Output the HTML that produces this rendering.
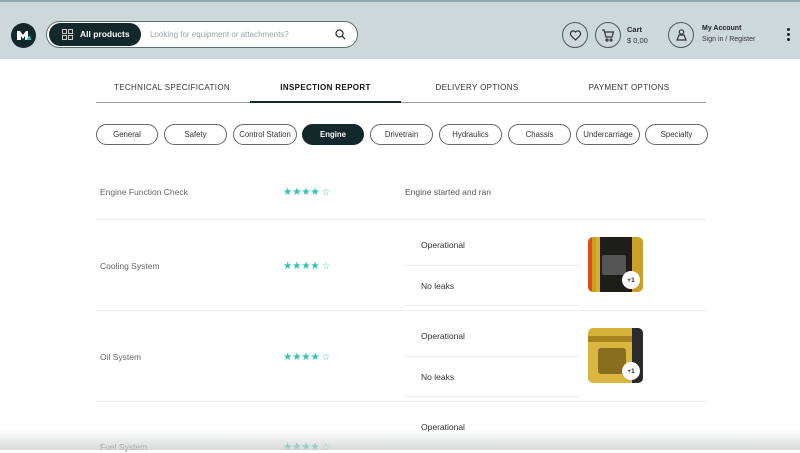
<!DOCTYPE html>
<html><head><meta charset="utf-8"><style>
*{box-sizing:border-box;margin:0;padding:0}
body{width:800px;height:450px;overflow:hidden;background:#fff;font-family:"Liberation Sans",sans-serif;position:relative}
.hdr{position:absolute;left:0;top:0;width:800px;height:59px;background:#cdd8da;border-top:2px solid #8fa8aa}
.abs{position:absolute}
.logo{left:11px;top:23px;width:25px;height:25px;border-radius:50%;background:#13282b}
.search{left:46px;top:21px;width:312px;height:27px;border-radius:14px;border:1px solid #5a6b6d;background:#fff}
.allp{left:49px;top:23px;width:92px;height:23px;border-radius:12px;background:#13282b;color:#fff;font-size:8.5px;font-weight:bold}
.ph{left:150px;top:30px;font-size:8px;color:#9aa4a8}
.circ{width:26px;height:26px;border-radius:50%;border:1px solid #4b5a5c}
.tab{top:83px;font-size:8px;letter-spacing:.35px;color:#333;text-align:center}
.pill{top:124px;height:21px;border-radius:11px;border:1px solid #666;font-size:7.8px;color:#333;display:flex;align-items:center;justify-content:center;background:#fff}
.lab{font-size:8.5px;color:#666}
.val{font-size:8.5px;color:#333}
.stars{font-size:10.5px;color:#2ec4b6;letter-spacing:-.3px}
.hl{height:1px;background:#eceeee}
.img{width:55px;height:55px;border-radius:5px;overflow:hidden}
.badge{right:3px;bottom:3px;width:18px;height:18px;border-radius:50%;background:#fff;font-size:6.5px;font-weight:bold;display:flex;align-items:center;justify-content:center;color:#222}
</style></head><body>
<div class="hdr"></div>
<div class="abs logo"><svg width="25" height="25" viewBox="0 0 25 25"><path d="M6 17V8h3l3 4 3-4h2v9h-3v-4l-2 3-2-3v4z" fill="#fff"/><path d="M15 17l4-5 1 5z" fill="#2ec4b6"/></svg></div>
<div class="abs search"></div>
<div class="abs allp"><svg class="abs" style="left:13px;top:6px" width="11" height="11" viewBox="0 0 11 11" fill="none" stroke="#ccc" stroke-width="1"><rect x=".5" y=".5" width="4" height="4"/><rect x="6.5" y=".5" width="4" height="4"/><rect x=".5" y="6.5" width="4" height="4"/><rect x="6.5" y="6.5" width="4" height="4"/></svg><span class="abs" style="left:31px;top:6px">All products</span></div>
<div class="abs ph">Looking for equipment or attachments?</div>
<svg class="abs" style="left:335px;top:29px" width="11" height="11" viewBox="0 0 11 11" fill="none" stroke="#333" stroke-width="1.3"><circle cx="4.5" cy="4.5" r="3.5"/><path d="M7 7l3 3"/></svg>
<div class="abs circ" style="left:562px;top:22px"><svg class="abs" style="left:6px;top:6px" width="13" height="13" viewBox="0 0 13 13" fill="none" stroke="#333" stroke-width="1.2"><path d="M6.5 11L2 6.5A2.5 2.5 0 016.5 3 2.5 2.5 0 0111 6.5z"/></svg></div>
<div class="abs circ" style="left:595px;top:22px"><svg class="abs" style="left:5px;top:6px" width="14" height="13" viewBox="0 0 14 13" fill="none" stroke="#333" stroke-width="1.2"><path d="M1 1h2l2 7h6l1.5-5H4"/><circle cx="6" cy="11" r="1"/><circle cx="10" cy="11" r="1"/></svg></div>
<div class="abs" style="left:627px;top:25px;font-size:7.5px;font-weight:bold;color:#222">Cart</div>
<div class="abs" style="left:627px;top:36px;font-size:7.5px;color:#333">$ 0,00</div>
<div class="abs circ" style="left:668px;top:22px"><svg class="abs" style="left:6px;top:5px" width="13" height="14" viewBox="0 0 13 14" fill="none" stroke="#333" stroke-width="1.2"><circle cx="6.5" cy="4" r="2.2"/><path d="M2 12l2-5h5l2 5z"/></svg></div>
<div class="abs" style="left:702px;top:25px;font-size:7px;font-weight:bold;color:#222">My Account</div>
<div class="abs" style="left:702px;top:36px;font-size:7px;color:#333">Sign in / Register</div>
<div class="abs" style="left:787px;top:28px;width:3px;height:3px;border-radius:50%;background:#222;box-shadow:0 5px 0 #222,0 10px 0 #222"></div>

<div class="abs tab" style="left:96px;width:152px">TECHNICAL SPECIFICATION</div>
<div class="abs tab" style="left:250px;width:151px;font-weight:bold;color:#111">INSPECTION REPORT</div>
<div class="abs tab" style="left:401px;width:152px">DELIVERY OPTIONS</div>
<div class="abs tab" style="left:553px;width:152px">PAYMENT OPTIONS</div>
<div class="abs" style="left:96px;top:102px;width:610px;height:1px;background:#999"></div>
<div class="abs" style="left:250px;top:101px;width:151px;height:2px;background:#13282b"></div>

<div class="abs pill" style="left:96px;width:62px">General</div>
<div class="abs pill" style="left:164px;width:63px">Safety</div>
<div class="abs pill" style="left:233px;width:64px">Control Station</div>
<div class="abs pill" style="left:302px;width:62px;background:#13282b;color:#fff;font-weight:bold;border-color:#13282b">Engine</div>
<div class="abs pill" style="left:370px;width:63px">Drivetrain</div>
<div class="abs pill" style="left:439px;width:63px">Hydraulics</div>
<div class="abs pill" style="left:508px;width:63px">Chassis</div>
<div class="abs pill" style="left:576px;width:64px">Undercarriage</div>
<div class="abs pill" style="left:645px;width:63px">Specialty</div>

<div class="abs lab" style="left:100px;top:187px">Engine Function Check</div>
<div class="abs stars" style="left:283px;top:186px">★★★★<span style="font-size:9.5px"> ☆</span></div>
<div class="abs val" style="left:405px;top:187px;color:#555">Engine started and ran</div>
<div class="abs hl" style="left:96px;top:219px;width:610px"></div>

<div class="abs lab" style="left:100px;top:261px">Cooling System</div>
<div class="abs stars" style="left:283px;top:260px">★★★★<span style="font-size:9.5px"> ☆</span></div>
<div class="abs val" style="left:421px;top:240px">Operational</div>
<div class="abs hl" style="left:405px;top:265px;width:175px"></div>
<div class="abs val" style="left:421px;top:281px">No leaks</div>
<div class="abs hl" style="left:405px;top:305px;width:175px"></div>
<div class="abs img" style="left:588px;top:237px;background:linear-gradient(90deg,#e04a1e 0 4px,#c8a020 4px 8px,#d8b030 8px 12px,#1d1d1a 12px 44px,#c9a028 44px);"><div class="abs" style="left:14px;top:18px;width:24px;height:20px;background:#555;border-radius:2px"></div><div class="abs badge">+1</div></div>
<div class="abs hl" style="left:96px;top:310px;width:610px"></div>

<div class="abs lab" style="left:100px;top:352px">Oil System</div>
<div class="abs stars" style="left:283px;top:351px">★★★★<span style="font-size:9.5px"> ☆</span></div>
<div class="abs val" style="left:421px;top:331px">Operational</div>
<div class="abs hl" style="left:405px;top:356px;width:175px"></div>
<div class="abs val" style="left:421px;top:372px">No leaks</div>
<div class="abs hl" style="left:405px;top:396px;width:175px"></div>
<div class="abs img" style="left:588px;top:328px;background:linear-gradient(#d6b23a 0 8px,#a88420 8px 14px,#d9b640 14px);"><div class="abs" style="left:44px;top:0;width:11px;height:55px;background:#2a2a2a"></div><div class="abs" style="left:10px;top:20px;width:28px;height:26px;background:#8a6e20;border-radius:3px"></div><div class="abs badge">+1</div></div>
<div class="abs hl" style="left:96px;top:401px;width:610px"></div>

<div class="abs lab" style="left:100px;top:442px">Fuel System</div>
<div class="abs stars" style="left:283px;top:441px">★★★★<span style="font-size:9.5px"> ☆</span></div>
<div class="abs val" style="left:421px;top:422px">Operational</div>
<div class="abs" style="left:0;top:430px;width:800px;height:20px;background:linear-gradient(rgba(255,255,255,0),rgba(205,208,208,.8));"></div>
</body></html>
